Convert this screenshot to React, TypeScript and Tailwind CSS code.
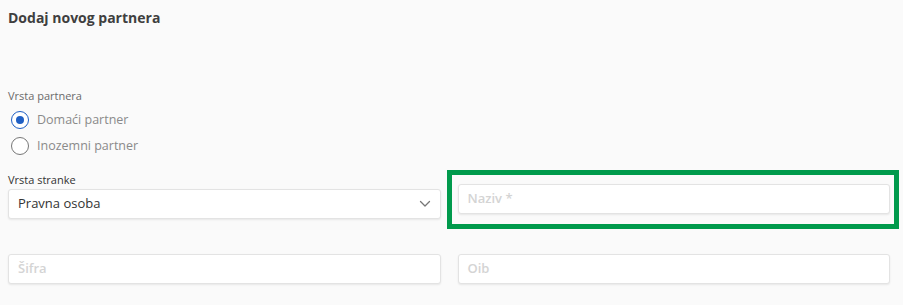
import React from 'react';

function Radio({ checked, label }: { checked?: boolean; label: string }) {
  return (
    <label className="flex items-center h-[26px] gap-[8px]">
      <span
        className={
          'w-[18px] h-[18px] rounded-full border-[1.5px] flex items-center justify-center bg-white ' +
          (checked ? 'border-[#1f5fc4]' : 'border-[#777]')
        }>
        {checked && <span className="w-[8px] h-[8px] rounded-full bg-[#1f5fc4]" />}
      </span>
      <span className="text-[12.5px] text-[#8a8a8a]">{label}</span>
    </label>
  );
}

function TextField({ placeholder }: { placeholder: string }) {
  return (
    <div className="h-[30px] bg-white border border-[#e3e3e3] rounded-[3px] shadow-[0_1px_2px_rgba(0,0,0,0.08)] flex items-center px-[9px]">
      <span className="text-[13px] font-semibold text-[#d4d4d4]">{placeholder}</span>
    </div>
  );
}

export default function App() {
  return (
    <div
      className="w-[903px] h-[305px] bg-[#fafafa] relative overflow-hidden"
      style={{ fontFamily: '"Open Sans", "Noto Sans", sans-serif' }}>
      <div className="pl-[8px] pr-[13px] pt-[8px]">
        <h1 className="text-[14px] font-bold text-[#3f3f3f] leading-[20px]">Dodaj novog partnera</h1>

        {/* Vrsta partnera */}
        <div className="mt-[60px] text-[11px] text-[#6b6b6b] leading-[16px]">Vrsta partnera</div>
        <div className="mt-[3px] pl-[3px] flex flex-col">
          <Radio checked label="Domaći partner" />
          <Radio label="Inozemni partner" />
        </div>

        {/* Vrsta stranke + Naziv */}
        <div className="grid grid-cols-2 gap-x-[17px] mt-[13px] items-start">
          <div>
            <div className="text-[11px] text-[#333] leading-[16px] mb-[1px]">Vrsta stranke</div>
            <div className="h-[30px] bg-white border border-[#e3e3e3] rounded-[3px] shadow-[0_1px_2px_rgba(0,0,0,0.08)] flex items-center justify-between pl-[9px] pr-[9px]">
              <span className="text-[13px] text-[#333]">Pravna osoba</span>
              <svg width="12" height="8" viewBox="0 0 12 8" fill="none">
                <path d="M1.5 1.5 L6 6 L10.5 1.5" stroke="#777" strokeWidth="1.3" strokeLinecap="round" strokeLinejoin="round" />
              </svg>
            </div>
          </div>
          <div className="mt-[12px]">
            <TextField placeholder="Naziv *" />
          </div>
        </div>

        {/* Šifra + Oib */}
        <div className="grid grid-cols-2 gap-x-[17px] mt-[35px]">
          <TextField placeholder="Šifra" />
          <TextField placeholder="Oib" />
        </div>
      </div>

      {/* highlight overlay */}
      <div className="absolute left-[447px] top-[170px] w-[452px] h-[59px] border-[5px] border-[#009a4c] pointer-events-none" />
    </div>
  );
}
